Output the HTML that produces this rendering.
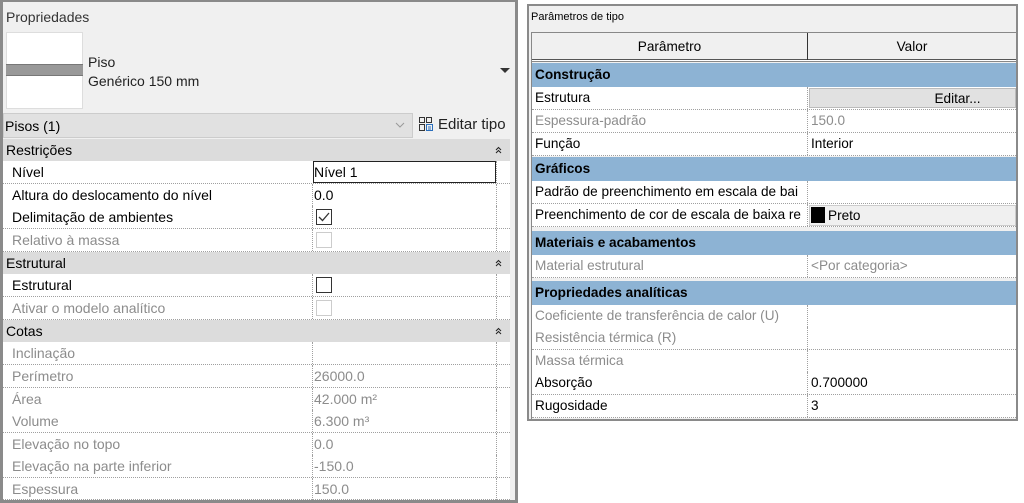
<!DOCTYPE html>
<html><head><meta charset="utf-8"><style>
*{margin:0;padding:0;box-sizing:border-box}
body{width:1024px;height:503px;background:#fff;position:relative;overflow:hidden;font-family:"Liberation Sans",sans-serif;font-size:14px;color:#000}
.a{position:absolute;white-space:nowrap}
.lp{left:0;top:0;width:518px;height:503px;background:#f0f0f0;border:3px solid #8a8a8a;border-top-width:2px}
.row{position:absolute;left:3px;width:507px;height:23px;background:#fff;border-bottom:1px dotted #a0a0a0}
.row .l{position:absolute;left:9px;top:3px}
.row .v{position:absolute;left:311px;top:3px}
.row .c1{position:absolute;left:309px;top:0;height:22px;border-left:1px dotted #a0a0a0}
.row .c2{position:absolute;left:493px;top:0;height:22px;border-left:1px dotted #a0a0a0}
.g{color:#8c8c8c}
.hd{position:absolute;left:3px;width:507px;height:22px;background:#dcdcdc;padding:3px 0 0 3px}
.hd svg{position:absolute;right:8px;top:7px}
.cb{position:absolute;left:313px;top:3px;width:16px;height:16px;border:1px solid #333;background:#fff}
.cbd{border-color:#ccc}
.rp{left:527px;top:4px;width:491px;height:417px;background:#f0f0f0;border:2px solid #8a8a8a}
.tr{position:absolute;left:532px;width:484px;height:23px;background:#fff;border-bottom:1px dotted #a0a0a0;font-size:13.6px}
.tr .l{position:absolute;left:3px;top:3px}
.tr .v{position:absolute;left:279px;top:3px}
.tr .c{position:absolute;left:275px;top:0;height:22px;border-left:1px dotted #a0a0a0}
.bh{position:absolute;left:532px;width:484px;height:24px;background:#8db3d4;font-weight:bold;padding:4px 0 0 3px;font-size:13.6px}
</style></head><body>
<div class="a lp"></div>
<div class="a" style="left:6px;top:9px;color:#333">Propriedades</div>
<div class="a" style="left:6px;top:32px;width:77px;height:77px;background:#fff;border:1px solid #ddd"></div>
<div class="a" style="left:6px;top:64px;width:77px;height:12px;background:#999;border-top:1px solid #777;border-bottom:1px solid #777"></div>
<div class="a" style="left:88px;top:54px;color:#222">Piso</div>
<div class="a" style="left:88px;top:73px;color:#222">Genérico 150 mm</div>
<div class="a" style="left:500px;top:68px;width:0;height:0;border-left:5px solid transparent;border-right:5px solid transparent;border-top:5px solid #333"></div>
<div class="a" style="left:3px;top:113px;width:410px;height:25px;background:#e1e1e1;border:1px solid #ccc"></div>
<div class="a" style="left:5px;top:118px">Pisos (1)</div>
<svg class="a" style="left:395px;top:122px" width="10" height="6"><path d="M1 1l4 4 4-4" stroke="#999" fill="none"/></svg>
<svg class="a" style="left:418px;top:116px" width="16" height="16" viewBox="0 0 16 16" fill="none" stroke="#333"><rect x="1.5" y="1.5" width="5" height="5"/><rect x="8.5" y="1.5" width="5" height="5"/><rect x="1.5" y="8.5" width="5" height="6"/><rect x="8.5" y="8.5" width="6" height="6" stroke="#2a6ebb"/><path d="M10 11h3M10 13h3" stroke="#2a6ebb"/></svg>
<div class="a" style="left:438px;top:116px;font-size:15px;color:#222">Editar tipo</div>
<div class="hd" style="top:139px">Restrições<svg width="7" height="8"><path d="M1 4l2.5-2.5L6 4M1 7l2.5-2.5L6 7" stroke="#222" fill="none"/></svg></div>
<div class="row" style="top:161px"><div class="l">Nível</div><div class="a" style="left:310px;top:0;width:183px;height:22px;border:1px solid #222"></div><div class="v">Nível 1</div><div class="c2"></div></div>
<div class="row" style="top:184px"><div class="l">Altura do deslocamento do nível</div><div class="c1"></div><div class="v">0.0</div><div class="c2"></div></div>
<div class="row" style="top:206px"><div class="l">Delimitação de ambientes</div><div class="c1"></div><div class="cb"></div><svg class="a" style="left:315px;top:6px" width="12" height="10"><path d="M1 5l3.5 3.5L11 1" stroke="#333" fill="none" stroke-width="1.3"/></svg><div class="c2"></div></div>
<div class="row" style="top:229px"><div class="l g">Relativo à massa</div><div class="c1"></div><div class="cb cbd"></div><div class="c2"></div></div>
<div class="hd" style="top:252px">Estrutural<svg width="7" height="8"><path d="M1 4l2.5-2.5L6 4M1 7l2.5-2.5L6 7" stroke="#222" fill="none"/></svg></div>
<div class="row" style="top:274px"><div class="l">Estrutural</div><div class="c1"></div><div class="cb"></div><div class="c2"></div></div>
<div class="row" style="top:297px"><div class="l g">Ativar o modelo analítico</div><div class="c1"></div><div class="cb cbd"></div><div class="c2"></div></div>
<div class="hd" style="top:320px">Cotas<svg width="7" height="8"><path d="M1 4l2.5-2.5L6 4M1 7l2.5-2.5L6 7" stroke="#222" fill="none"/></svg></div>
<div class="row" style="top:342px"><div class="l g">Inclinação</div><div class="c1"></div><div class="c2"></div></div>
<div class="row" style="top:365px"><div class="l g">Perímetro</div><div class="c1"></div><div class="v g">26000.0</div><div class="c2"></div></div>
<div class="row" style="top:388px"><div class="l g">Área</div><div class="c1"></div><div class="v g">42.000 m²</div><div class="c2"></div></div>
<div class="row" style="top:410px"><div class="l g">Volume</div><div class="c1"></div><div class="v g">6.300 m³</div><div class="c2"></div></div>
<div class="row" style="top:433px"><div class="l g">Elevação no topo</div><div class="c1"></div><div class="v g">0.0</div><div class="c2"></div></div>
<div class="row" style="top:455px"><div class="l g">Elevação na parte inferior</div><div class="c1"></div><div class="v g">-150.0</div><div class="c2"></div></div>
<div class="row" style="top:478px;height:22px"><div class="l g">Espessura</div><div class="c1"></div><div class="v g">150.0</div><div class="c2"></div></div>

<div class="a rp"></div>
<div class="a" style="left:531px;top:11px;font-size:11px">Parâmetros de tipo</div>
<div class="a" style="left:531px;top:32px;width:486px;height:30px;background:#fff;border:1px solid #888"></div>
<div class="a" style="left:532px;top:33px;width:484px;height:27px;background:#f0f0f0;border-bottom:1px solid #555"></div>
<div class="a" style="left:807px;top:33px;height:27px;border-left:1px solid #333"></div>
<div class="a" style="left:532px;top:39px;width:275px;text-align:center;font-size:13.6px">Parâmetro</div>
<div class="a" style="left:808px;top:39px;width:208px;text-align:center;font-size:13.6px">Valor</div>
<div class="a" style="left:531px;top:62px;width:1px;height:357px;background:#888"></div>
<div class="bh" style="top:63px">Construção</div>
<div class="tr" style="top:87px"><div class="l">Estrutura</div><div class="c"></div><div class="a" style="left:277px;top:1px;width:207px;height:20px;background:#e1e1e1;border:1px solid #bbb;text-align:center;padding:2px 0 0 90px">Editar...</div></div>
<div class="tr" style="top:110px"><div class="l g">Espessura-padrão</div><div class="c"></div><div class="v g">150.0</div></div>
<div class="tr" style="top:133px"><div class="l">Função</div><div class="c"></div><div class="v">Interior</div></div>
<div class="bh" style="top:157px">Gráficos</div>
<div class="tr" style="top:181px"><div class="l">Padrão de preenchimento em escala de bai</div><div class="c"></div></div>
<div class="tr" style="top:204px"><div class="l">Preenchimento de cor de escala de baixa re</div><div class="a" style="left:277px;top:1px;width:207px;height:21px;background:#f0f0f0;border:1px solid #ccc"></div><div class="c"></div><div class="a" style="left:279px;top:3px;width:14px;height:16px;background:#000"></div><div class="a" style="left:296px;top:4px">Preto</div></div>
<div class="bh" style="top:231px">Materiais e acabamentos</div>
<div class="tr" style="top:255px"><div class="l g">Material estrutural</div><div class="c"></div><div class="v g">&lt;Por categoria&gt;</div></div>
<div class="bh" style="top:281px">Propriedades analíticas</div>
<div class="tr" style="top:305px"><div class="l g">Coeficiente de transferência de calor (U)</div><div class="c"></div></div>
<div class="tr" style="top:327px"><div class="l g">Resistência térmica (R)</div><div class="c"></div></div>
<div class="tr" style="top:350px"><div class="l g">Massa térmica</div><div class="c"></div></div>
<div class="tr" style="top:372px"><div class="l">Absorção</div><div class="c"></div><div class="v">0.700000</div></div>
<div class="tr" style="top:395px"><div class="l">Rugosidade</div><div class="c"></div><div class="v">3</div></div>
</body></html>
